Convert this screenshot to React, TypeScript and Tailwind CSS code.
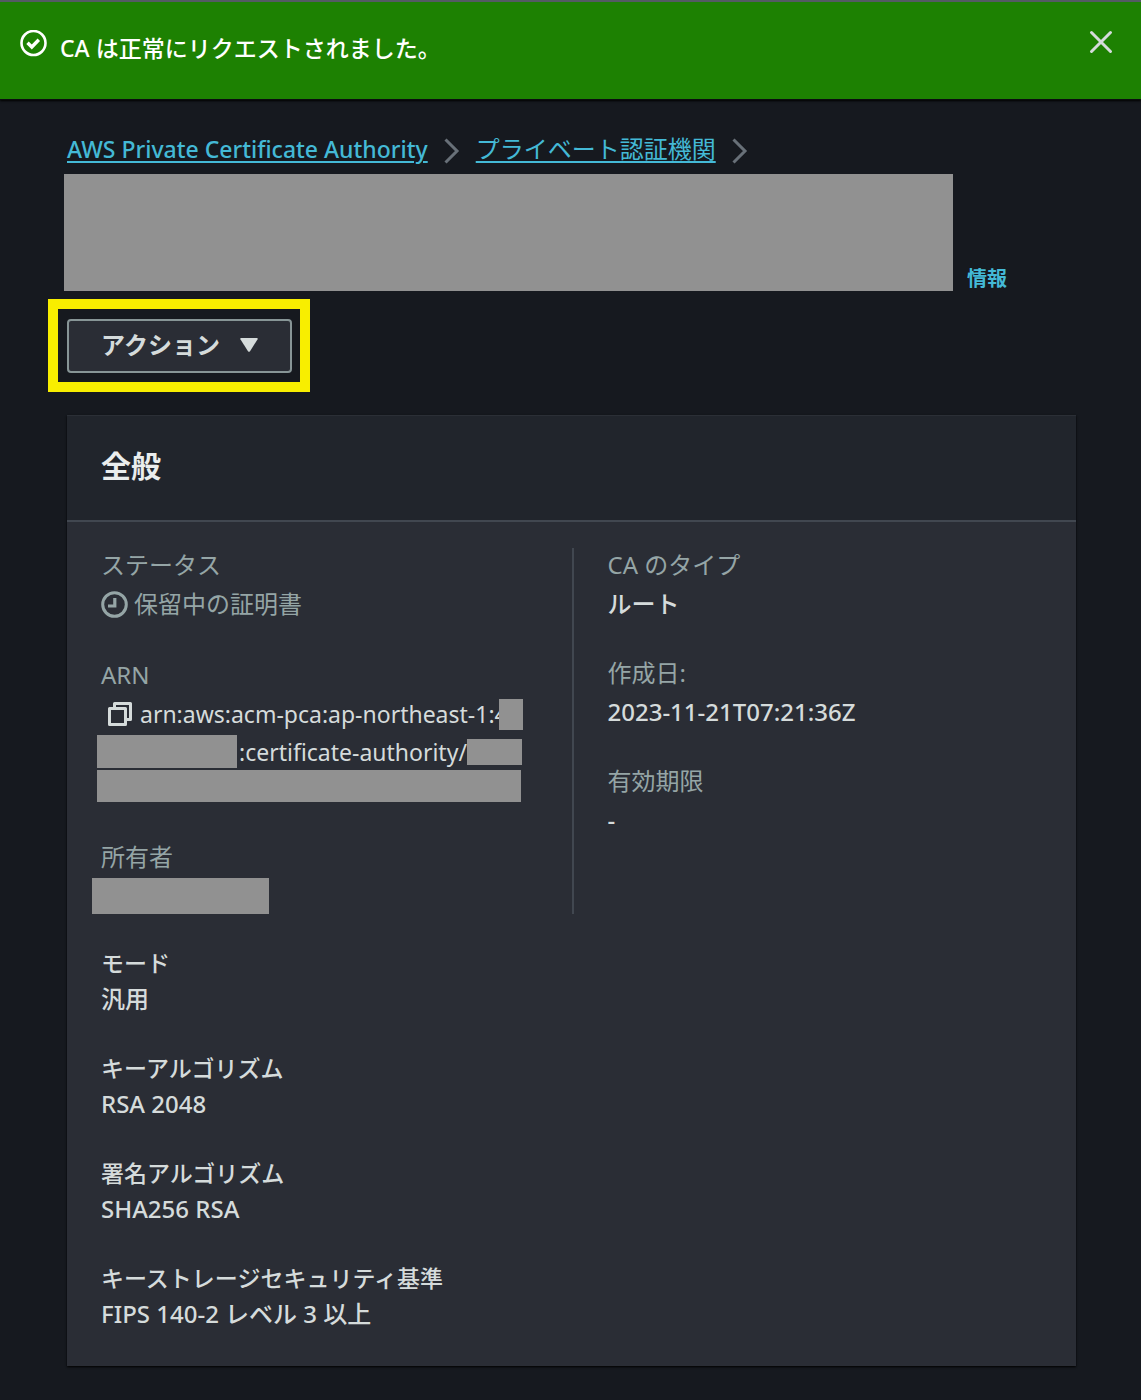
import type {ReactNode} from "react";

const fontStack = "font-['Noto_Sans','Noto_Sans_CJK_JP',sans-serif]";

interface FieldProps {
  label: string;
  children: ReactNode;
}

// 伏せ字のブロック
function Redacted({className}: {className: string}) {
  return <span aria-hidden="true" className={`block shrink-0 bg-[#919191] ${className}`} />;
}

function Field({label, children}: FieldProps) {
  return (
    <div>
      <dt className="text-2xl leading-[34px] text-[#95a5a6]">{label}</dt>
      <dd className="mt-1 text-2xl leading-9 font-medium text-[#d5dbdb]">{children}</dd>
    </div>
  );
}

function PlainField({label, children}: FieldProps) {
  return (
    <div className="leading-9 font-medium text-[#d5dbdb]">
      <dt className="text-[23px] leading-9">{label}</dt>
      <dd className="text-2xl leading-9">{children}</dd>
    </div>
  );
}

function Chevron() {
  return (
    <svg viewBox="0 0 16 26" className="h-[26px] w-4 shrink-0" fill="none" stroke="#687078" strokeWidth="3" aria-hidden="true">
      <path d="M1.5 1.5 13 13 1.5 24.5" />
    </svg>
  );
}

export default function App() {
  return (
    <div className={`min-h-screen bg-[#16191f] pb-8 ${fontStack}`}>
      {/* 通知バナー */}
      <div role="status" className="flex h-[100px] items-start border-t-2 border-b border-t-[#545b64] border-b-[#0b0d10] bg-[#1d8102] pt-7 pr-7 pl-5 text-white shadow-[0_1px_2px_#000000]">
        <svg viewBox="0 0 27 27" className="size-[27px] shrink-0" fill="none" stroke="currentColor" aria-hidden="true">
          <circle cx="13.5" cy="13" r="12" strokeWidth="2.6" />
          <path d="m7.5 12.8 4.3 4.2 7-7.2" strokeWidth="3.4" />
        </svg>
        <p className="ml-[13px] flex-1 text-[23px] leading-9 font-medium">CA は正常にリクエストされました。</p>
        <button type="button" aria-label="閉じる" className="flex h-6 w-6 items-center justify-center text-[#d5dbdb]">
          <svg viewBox="0 0 24 24" className="size-6" fill="none" stroke="currentColor" strokeWidth="3" strokeLinecap="round">
            <path d="m2.5 2.5 19 19m0-19-19 19" />
          </svg>
        </button>
      </div>

      <main className="pr-[65px] pl-[67px]">
        {/* パンくずリスト */}
        <nav aria-label="パンくずリスト" className="flex items-center gap-4 pt-8 text-[#44b9d6]">
          <a href="#" className="pb-1 text-[23px] leading-[34px] font-medium underline decoration-2 underline-offset-3">AWS Private Certificate Authority</a>
          <Chevron />
          <a href="#" className="pb-1 text-2xl leading-[34px] underline decoration-2 underline-offset-3">プライベート認証機関</a>
          <Chevron />
        </nav>

        <div className="-ml-[3px] flex items-end gap-[14px] pt-1">
          <Redacted className="h-[117px] w-[889px]" />
          <a href="#" className="text-xl leading-6 font-bold text-[#44b9d6]">情報</a>
        </div>

        {/* アクション */}
        <div className="mt-2 -ml-[19px] w-fit border-10 border-[#f8ee00] pt-[10px] pr-2 pb-[9px] pl-[9px]">
          <button type="button" className="flex h-[54px] w-[225px] items-center justify-center gap-5 rounded border-2 border-[#879596] bg-[#2a2d35] pb-[2px] text-2xl font-bold text-[#d5dbdb]">
            アクション
            <svg viewBox="0 0 18 14" className="h-[14px] w-[18px]" fill="currentColor" aria-hidden="true">
              <path d="M1 0h16q1 .3.6 1.2L10 13.2q-1 1-2 0L.4 1.2Q0 .3 1 0Z" />
            </svg>
          </button>
        </div>

        <section className="mt-[23px] bg-[#2a2d35] shadow-[0_1px_2px_#000000]">
          <header className="border-t border-b-2 border-t-[#2b2f36] border-b-[#414750] bg-[#21252c] px-[34px] pt-[29px] pb-[33px]">
            <h2 className="text-3xl leading-[42px] font-bold text-[#eaeded]">全般</h2>
          </header>

          <dl className="pb-[34px]">
            <div className="grid grid-cols-2 pt-[26px]">
              <div className="flex flex-col gap-9 pl-[34px]">
                <Field label="ステータス">
                  <span className="flex items-center gap-[6px] font-normal text-[#95a5a6]">
                    <svg viewBox="0 0 27 27" className="size-[27px] shrink-0" fill="none" stroke="currentColor" strokeWidth="3" aria-hidden="true">
                      <circle cx="13.5" cy="13.5" r="11.8" />
                      <path d="M13.8 7v8H7" strokeWidth="3.2" />
                    </svg>
                    保留中の証明書
                  </span>
                </Field>
                <Field label="ARN">
                  <span className="flex h-9 items-center pl-[7px] text-[23px] font-normal">
                    <button type="button" aria-label="ARN をコピー" className="mr-2">
                      <svg viewBox="0 0 24 24" className="size-6" fill="none" stroke="currentColor" strokeWidth="3" strokeLinejoin="round" aria-hidden="true">
                        <path d="M1.5 6.5h16v16h-16Z" />
                        <path d="M6.5 6.5v-5h16v16h-5" />
                      </svg>
                    </button>
                    <span>arn:aws:acm-pca:ap-northeast-1:4</span>
                    <Redacted className="-ml-[9px] h-[31px] w-6" />
                  </span>
                  <span className="-ml-1 flex h-9 items-end text-[23px] font-normal">
                    <Redacted className="mr-[2px] h-[33px] w-[140px]" />
                    <span className="leading-8">:certificate-authority/</span>
                    <Redacted className="mb-[3px] h-[26px] w-[55px]" />
                  </span>
                  <span className="-ml-1 flex h-9 items-center">
                    <Redacted className="h-8 w-[424px]" />
                  </span>
                </Field>
                <Field label="所有者">
                  <Redacted className="-ml-[9px] h-9 w-[177px]" />
                </Field>
              </div>
              <div className="flex flex-col gap-[34px] border-l-2 border-[#414750] pl-[34px]">
                <Field label="CA のタイプ">ルート</Field>
                <Field label="作成日:">2023-11-21T07:21:36Z</Field>
                <Field label="有効期限">-</Field>
              </div>
            </div>

            <div className="mt-[31px] flex flex-col gap-[33px] pl-[34px]">
              <PlainField label="モード">汎用</PlainField>
              <PlainField label="キーアルゴリズム">RSA 2048</PlainField>
              <PlainField label="署名アルゴリズム">SHA256 RSA</PlainField>
              <PlainField label="キーストレージセキュリティ基準">FIPS 140-2 レベル 3 以上</PlainField>
            </div>
          </dl>
        </section>
      </main>
    </div>
  );
}
